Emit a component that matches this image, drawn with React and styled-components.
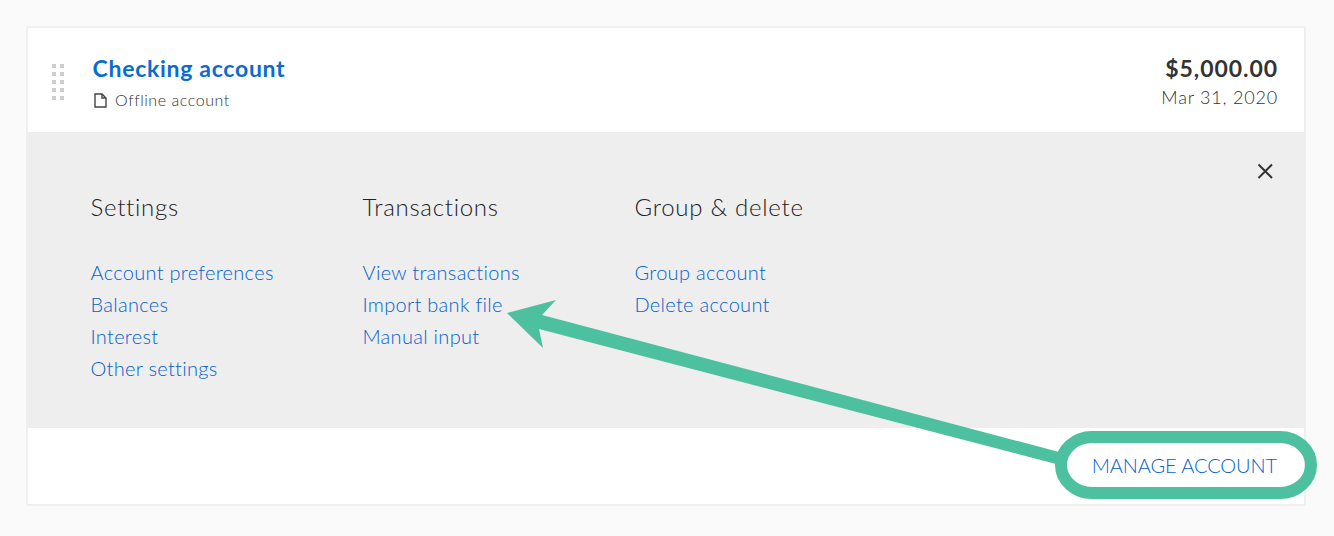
import React from "react";
import styled, { createGlobalStyle } from "styled-components";

const GlobalStyle = createGlobalStyle`
  html, body {
    margin: 0;
    padding: 0;
    background: #fafafa;
    font-family: Lato, "Liberation Sans", sans-serif;
  }
`;

const Page = styled.div`
  position: relative;
  width: 1334px;
  height: 536px;
  padding: 26px 28px 30px 26px;
  box-sizing: border-box;
  overflow: hidden;
`;

const Card = styled.div`
  height: 480px;
  border: 2px solid #efefef;
  border-radius: 2px;
  background: #fff;
  box-sizing: border-box;
  display: flex;
  flex-direction: column;
`;

const Header = styled.div`
  height: 104px;
  display: flex;
  align-items: flex-start;
  padding: 0 26px 0 24px;
`;

const Grip = styled.div`
  display: grid;
  grid-template-columns: repeat(2, 4px);
  grid-auto-rows: 4px;
  gap: 4px;
  margin: 36px 28px 0 0;
  width: 12px;

  span {
    background: #cfcfcf;
  }
`;

const Account = styled.div`
  margin-left: 1px;
`;

const AccountName = styled.a`
  display: block;
  margin-top: 25px;
  margin-left: -0.5px;
  font-size: 23px;
  line-height: 30px;
  font-weight: 700;
  letter-spacing: 0.72px;
  color: #0a6bd0;
`;

const AccountType = styled.div`
  display: flex;
  align-items: center;
  gap: 7px;
  margin-top: 3px;
  font-size: 16px;
  line-height: 28px;
  font-weight: 300;
  letter-spacing: 0.55px;
  color: #333;
`;

const Amounts = styled.div`
  margin-left: auto;
  margin-top: 25px;
  text-align: right;
`;

const Balance = styled.div`
  font-size: 23px;
  line-height: 30px;
  font-weight: 700;
  letter-spacing: 0.95px;
  color: #333;
`;

const AccountDate = styled.div`
  font-size: 18px;
  line-height: 28px;
  font-weight: 300;
  letter-spacing: 0.8px;
  color: #333;
`;

const Panel = styled.div`
  position: relative;
  height: 296px;
  background: #eeeeee;
  display: flex;
  padding: 59px 0 0 62.5px;
  box-sizing: border-box;
`;

const CloseButton = styled.button`
  position: absolute;
  top: 28px;
  right: 28px;
  width: 22px;
  height: 22px;
  padding: 0;
  border: 0;
  background: none;
  color: #333;
`;

const Column = styled.div`
  width: 272px;
`;

const ColumnTitle = styled.div`
  font-size: 24px;
  line-height: 32px;
  font-weight: 300;
  letter-spacing: 0.72px;
  color: #222;
  margin-bottom: 33px;
`;

const MenuLink = styled.a`
  display: block;
  font-size: 20px;
  line-height: 32px;
  font-weight: 300;
  letter-spacing: 0.3px;
  color: #0562cc;
`;

const Footer = styled.div`
  flex: 1;
  display: flex;
  align-items: center;
  justify-content: flex-end;
  padding: 0 27px 2px 0;
`;

const ManageLink = styled.a`
  font-size: 20px;
  font-weight: 300;
  letter-spacing: -0.1px;
  color: #0562cc;
`;

const Annotation = styled.svg`
  position: absolute;
  top: 0;
  left: 0;
  pointer-events: none;
`;

const columns = [
  { title: "Settings", links: ["Account preferences", "Balances", "Interest", "Other settings"] },
  { title: "Transactions", links: ["View transactions", "Import bank file", "Manual input"] },
  { title: "Group & delete", links: ["Group account", "Delete account"] },
];

export default function App() {
  return (
    <Page>
      <GlobalStyle />
      <Card>
        <Header>
          <Grip>
            {Array.from({ length: 10 }).map((_, i) => (
              <span key={i} />
            ))}
          </Grip>
          <Account>
            <AccountName>Checking account</AccountName>
            <AccountType>
              <svg width="15" height="15" viewBox="0 0 15 15" fill="none" stroke="#444" strokeWidth="1.4">
                <path d="M2 1h7l4 4v9H2z" />
                <path d="M9 1v4h4" />
              </svg>
              Offline account
            </AccountType>
          </Account>
          <Amounts>
            <Balance>$5,000.00</Balance>
            <AccountDate>Mar 31, 2020</AccountDate>
          </Amounts>
        </Header>
        <Panel>
          <CloseButton aria-label="Close">
            <svg width="22" height="22" viewBox="0 0 22 22" stroke="currentColor" strokeWidth="2">
              <path d="M4.5 4.5l13.5 13.5M18 4.5L4.5 18" />
            </svg>
          </CloseButton>
          {columns.map((column) => (
            <Column key={column.title}>
              <ColumnTitle>{column.title}</ColumnTitle>
              {column.links.map((link) => (
                <MenuLink key={link}>{link}</MenuLink>
              ))}
            </Column>
          ))}
        </Panel>
        <Footer>
          <ManageLink>MANAGE ACCOUNT</ManageLink>
        </Footer>
      </Card>
      <Annotation width="1334" height="536" viewBox="0 0 1334 536">
        <rect x="1061" y="437" width="250" height="56" rx="31" ry="28" fill="none" stroke="#4cc09f" strokeWidth="12" />
        <path
          d="M507 313L556 300L542 315L1059 452L1056 464L539 329L543 348Z"
          fill="#4cc09f"
        />
      </Annotation>
    </Page>
  );
}
